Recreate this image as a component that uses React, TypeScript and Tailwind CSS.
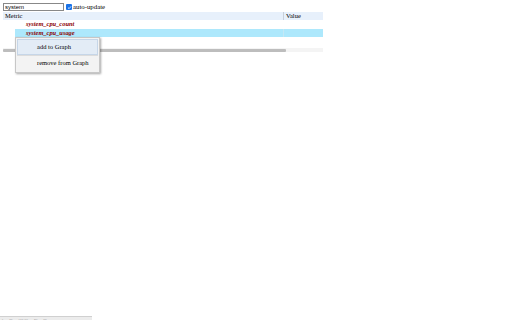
import React from "react";

const App = () => {
  return (
    <div className="relative h-[320px] w-[512px] overflow-hidden bg-white font-['Liberation_Serif',serif] text-[7px] leading-none text-black">
      <div className="flex items-center px-[3px] pt-[3px]">
        <input
          className="h-[8px] w-[61px] border border-[#888] px-[1px] font-['Liberation_Sans',sans-serif] text-[6px] leading-none outline-none"
          defaultValue="system"
        />
        <span className="ml-[2px] mr-[1px] flex h-[6px] w-[6px] items-center justify-center rounded-[1px] bg-[#1a73e8]">
          <svg viewBox="0 0 10 10" className="h-[5px] w-[5px]">
            <path d="M2 5.2 L4.2 7.3 L8 2.8" fill="none" stroke="white" strokeWidth="1.6" />
          </svg>
        </span>
        <span className="text-[6.8px]">auto-update</span>
      </div>

      <div className="mx-[3px] mt-[1px] w-[320px]">
        <div className="flex h-[8px] items-center bg-[#e7f0fb]">
          <div className="w-[280px] pl-[2px] text-[6.5px]">Metric</div>
          <div className="h-full border-l border-[#c8d0da] pl-[2px] text-[6.5px] leading-[8px]">Value</div>
        </div>
        <div className="flex h-[9px] items-center pl-[23px] text-[6.4px] font-bold italic text-[#8b0000]">
          system_cpu_count
        </div>
        <div className="ml-[12px] flex h-[8px] items-center bg-[#ade8fc]">
          <div className="w-[268px] pl-[11px] text-[6.4px] font-bold italic text-[#8b0000]">system_cpu_usage</div>
          <div className="h-full border-l border-[#c5e8f5]" />
        </div>
        <div className="mt-[11px] flex h-[4px] items-center bg-[#f4f4f4]">
          <div className="h-[3px] w-[283px] rounded-[1px] bg-[#bdbdbd]" />
        </div>
      </div>

      <div className="absolute left-[15px] top-[37px] w-[85px] border border-[#c7c7c7] bg-[#f3f3f3] p-[1px] shadow-[1px_1px_2px_rgba(0,0,0,0.35)]">
        <div className="flex h-[16px] items-center border border-[#c6d6e8] bg-[#e3ecf6] pl-[19px] text-[6.5px]">add to Graph</div>
        <div className="flex h-[16px] items-center border-t border-[#dcdcdc] pl-[20px] text-[6.5px]">remove from Graph</div>
      </div>

      <div className="absolute bottom-0 left-0 flex h-[4px] w-[92px] items-center gap-[6px] border-t border-[#d0d0d0] bg-[#ececec] px-[2px] font-['Liberation_Sans',sans-serif] text-[2px] text-[#999]">
        <span>0</span>
        <span>100</span>
        <span>1 2 3 4 5 6</span>
        <span>200</span>
        <span>300</span>
      </div>
    </div>
  );
};

export default App;
